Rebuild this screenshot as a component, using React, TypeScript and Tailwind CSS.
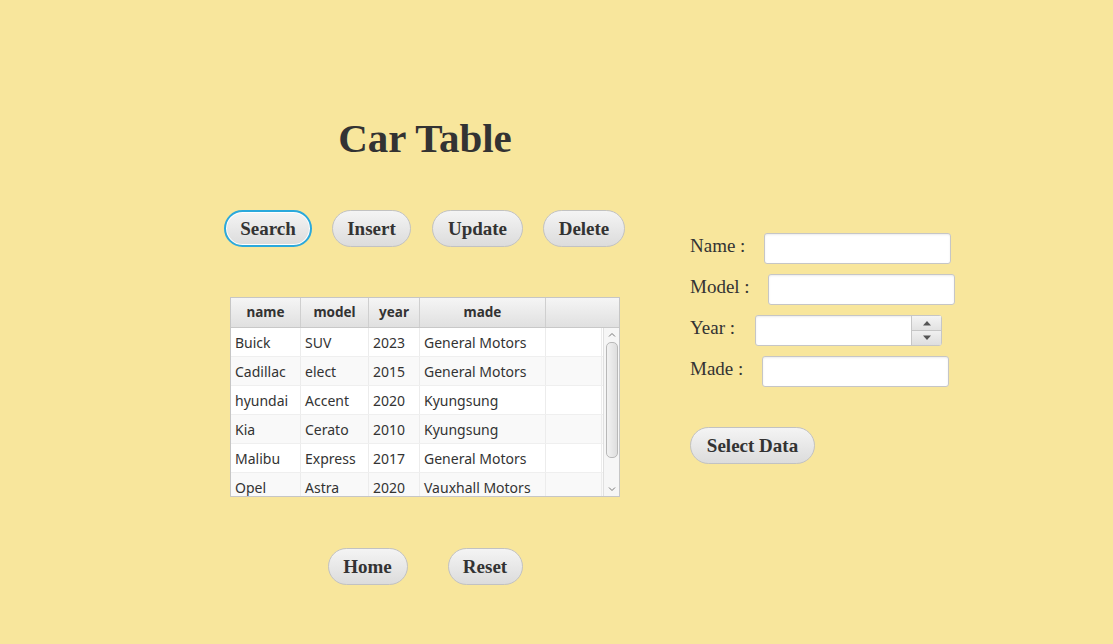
const rows = [
  ['Buick', 'SUV', '2023', 'General Motors'],
  ['Cadillac', 'elect', '2015', 'General Motors'],
  ['hyundai', 'Accent', '2020', 'Kyungsung'],
  ['Kia', 'Cerato', '2010', 'Kyungsung'],
  ['Malibu', 'Express', '2017', 'General Motors'],
  ['Opel', 'Astra', '2020', 'Vauxhall Motors'],
]

const cols = ['w-[70px]', 'w-[68px]', 'w-[51px]', 'w-[126px]']

function Btn({ label, focused, className }: { label: string; focused?: boolean; className?: string }) {
  return (
    <button
      className={
        'h-[37px] rounded-full bg-gradient-to-b from-[#f4f4f4] to-[#dcdcdc] pt-[1px] font-["Liberation_Serif",serif] text-[19px] font-bold text-[#333] ' +
        (focused
          ? 'border-2 border-[#2ba9dc] shadow-[inset_0_0_0_1px_#ffffff]'
          : 'border border-[#c2c2c2]') +
        ' ' +
        (className ?? '')
      }
    >
      {label}
    </button>
  )
}

function Field({ label, gap }: { label: string; gap: string }) {
  return (
    <div className="flex h-[31px] items-center">
      <div className={'-mt-[4px] font-["Liberation_Serif",serif] text-[19px] text-[#333] ' + gap}>{label}</div>
      <div className="h-[31px] w-[187px] rounded-[3px] border border-[#c6c6c6] bg-white shadow-[inset_0_1px_2px_rgba(0,0,0,0.08)]" />
    </div>
  )
}

export default function App() {
  return (
    <div className="flex h-[644px] w-[1113px] bg-[#f8e69c] font-['Liberation_Serif',serif]">
      <div className="ml-[224px] flex w-[402px] flex-col items-center">
        <h1 className="mt-[116px] h-[44px] text-[41px] font-bold leading-[44px] text-[#333]">Car Table</h1>
        <div className="mt-[50px] flex w-full items-center">
          <Btn label="Search" focused className="w-[88px]" />
          <Btn label="Insert" className="ml-[20px] w-[79px]" />
          <Btn label="Update" className="ml-[21px] w-[91px]" />
          <Btn label="Delete" className="ml-[20px] w-[82px]" />
        </div>
        <div className="mt-[50px] ml-[6px] h-[200px] w-[390px] self-start border border-[#c6c6c6] bg-white font-['Noto_Sans',sans-serif]">
          <div className="flex h-[30px] border-b border-[#c8c8c8] bg-gradient-to-b from-[#f5f5f5] to-[#e0e0e0] text-[13.5px] font-bold text-[#333]">
            {['name', 'model', 'year', 'made'].map((h, i) => (
              <div key={h} className={cols[i] + ' flex items-center justify-center border-r border-[#cfcfcf]'}>
                {h}
              </div>
            ))}
            <div className="flex-1" />
          </div>
          <div className="flex h-[168px]">
            <div className="h-full flex-1 overflow-hidden">
              {rows.map((r, ri) => (
                <div
                  key={ri}
                  className={'flex h-[29px] border-b border-[#efefef] text-[14px] text-[#333] ' + (ri % 2 ? 'bg-[#f9f9f9]' : 'bg-white')}
                >
                  {r.map((c, ci) => (
                    <div key={ci} className={cols[ci] + ' flex items-center border-r border-[#ececec] pl-[4px]'}>
                      {c}
                    </div>
                  ))}
                  <div className="w-[56px] border-r border-[#ececec]" />
                </div>
              ))}
            </div>
            <div className="flex w-[16px] flex-col items-center border-l border-[#e0e0e0] bg-[#f6f6f6]">
              <svg width="10" height="10" viewBox="0 0 10 10" className="mt-[2px]">
                <path d="M2 6.5 L5 3.5 L8 6.5" fill="none" stroke="#777" strokeWidth="1" />
              </svg>
              <div className="mt-[2px] h-[116px] w-[12px] rounded-[5px] border border-[#b8b8b8] bg-gradient-to-r from-[#f2f2f2] to-[#dedede]" />
              <div className="flex-1" />
              <svg width="10" height="10" viewBox="0 0 10 10" className="mb-[2px]">
                <path d="M2 3.5 L5 6.5 L8 3.5" fill="none" stroke="#777" strokeWidth="1" />
              </svg>
            </div>
          </div>
        </div>
        <div className="mt-[51px] flex items-center">
          <Btn label="Home" className="h-[36px] w-[80px]" />
          <Btn label="Reset" className="ml-[40px] h-[36px] w-[75px]" />
        </div>
      </div>
      <div className="ml-[64px] flex flex-col">
        <div className="mt-[233px] flex flex-col gap-[10px]">
          <Field label="Name :" gap="w-[74px]" />
          <Field label="Model :" gap="w-[78px]" />
          <div className="flex h-[31px] items-center">
            <div className="-mt-[4px] w-[65px] font-['Liberation_Serif',serif] text-[19px] text-[#333]">Year :</div>
            <div className="flex h-[31px] w-[187px] rounded-[3px] border border-[#c6c6c6] bg-white shadow-[inset_0_1px_2px_rgba(0,0,0,0.08)]">
              <div className="flex-1" />
              <div className="flex w-[30px] flex-col border-l border-[#c6c6c6]">
                <div className="flex flex-1 items-center justify-center border-b border-[#c6c6c6] bg-gradient-to-b from-[#f4f4f4] to-[#e2e2e2]">
                  <svg width="10" height="6" viewBox="0 0 10 6">
                    <path d="M1 5.5 L5 1 L9 5.5 Z" fill="#555" />
                  </svg>
                </div>
                <div className="flex flex-1 items-center justify-center bg-gradient-to-b from-[#f0f0f0] to-[#dedede]">
                  <svg width="10" height="6" viewBox="0 0 10 6">
                    <path d="M1 0.5 L5 5 L9 0.5 Z" fill="#555" />
                  </svg>
                </div>
              </div>
            </div>
          </div>
          <Field label="Made :" gap="w-[72px]" />
        </div>
        <Btn label="Select Data" className="mt-[40px] h-[37px] w-[125px]" />
      </div>
    </div>
  )
}
